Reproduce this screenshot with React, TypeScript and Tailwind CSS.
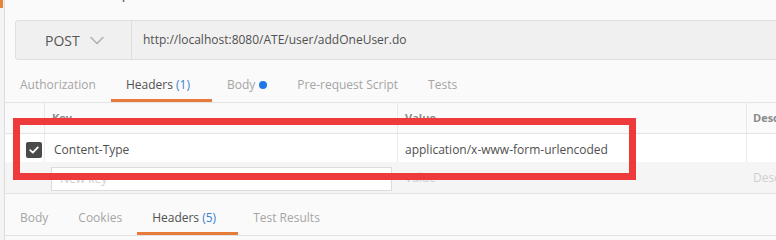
import React from "react";

const font = { fontFamily: '"Open Sans", "Liberation Sans", sans-serif' };

function Chevron() {
  return (
    <svg width="14" height="9" viewBox="0 0 14 9" fill="none">
      <path d="M1 1.5 L7 7.5 L13 1.5" stroke="#b0b0b0" strokeWidth="1.6" strokeLinecap="round" strokeLinejoin="round" />
    </svg>
  );
}

function Check() {
  return (
    <div className="w-[16px] h-[16px] rounded-[2px] bg-[#4a4a4a] flex items-center justify-center">
      <svg width="10" height="8" viewBox="0 0 10 8" fill="none">
        <path d="M1.2 4.2 L3.8 6.6 L8.8 1.4" stroke="#ffffff" strokeWidth="1.8" strokeLinecap="round" strokeLinejoin="round" />
      </svg>
    </div>
  );
}

export default function App() {
  return (
    <div className="w-[776px] h-[240px] bg-[#fafafa] overflow-hidden relative flex" style={font}>
      {/* left strip */}
      <div className="w-[5px] h-full bg-[#f4f4f4] border-r border-[#dcdcdc] flex flex-col shrink-0">
        <div className="w-[3px] h-[8px] bg-[#e8843a]" />
      </div>

      {/* main */}
      <div className="flex-1 min-w-0 flex flex-col">
        {/* clipped title */}
        <div className="h-[20px] overflow-hidden">
          <div className="-mt-[17px] pl-[28px] text-[16px] leading-[18px] text-[#606060] whitespace-nowrap">
            Untitled Request
          </div>
        </div>

        {/* url bar */}
        <div className="ml-[10px] h-[40px] w-[800px] flex border border-[#dedede] bg-[#f0f0f0] rounded-l-[3px]">
          <div className="w-[116px] shrink-0 border-r border-[#dedede] flex items-center pl-[29px] gap-[10px]">
            <span className="text-[14px] text-[#555555]">POST</span>
            <Chevron />
          </div>
          <div className="flex items-center pl-[11px] text-[12px] text-[#505050]">
            http://localhost:8080/ATE/user/addOneUser.do
          </div>
        </div>

        {/* request tabs */}
        <div className="h-[43px] border-b border-[#e4e4e4] flex text-[12px] leading-[18px] whitespace-nowrap">
          <div className="h-[42px] px-[15px] pt-[16px] text-[#a5a5a5]">Authorization</div>
          <div className="h-[42px] pl-[15px] pr-[22px] pt-[16px] text-[#505050] border-b-[3px] border-[#e67b3a]">
            Headers <span className="text-[#3b7fd4]">(1)</span>
          </div>
          <div className="h-[42px] px-[15px] pt-[16px] text-[#a5a5a5] flex items-start gap-[4px]">
            Body
            <span className="mt-[5px] w-[8px] h-[8px] rounded-full bg-[#1f76e8]" />
          </div>
          <div className="h-[42px] px-[15px] pt-[16px] text-[#a5a5a5]">Pre-request Script</div>
          <div className="h-[42px] px-[15px] pt-[16px] text-[#a5a5a5]">Tests</div>
        </div>

        {/* table header */}
        <div className="h-[31px] border-b border-[#e4e4e4] flex bg-[#fafafa] text-[11px] font-bold text-[#8a8a8a]">
          <div className="w-[40px] shrink-0 border-r border-[#e8e8e8]" />
          <div className="w-[352px] shrink-0 flex items-center pl-[7px]">Key</div>
          <div className="w-[349px] shrink-0 border-l border-[#e8e8e8] flex items-center pl-[7px]">Value</div>
          <div className="flex-1 border-l border-[#e8e8e8] flex items-center pl-[6px] overflow-hidden whitespace-nowrap">Description</div>
        </div>

        {/* row 1 */}
        <div className="h-[28px] flex bg-white text-[12px] text-[#505050]">
          <div className="w-[40px] shrink-0 border-r border-[#ececec] flex items-center pl-[21px] pt-[3px]">
            <Check />
          </div>
          <div className="w-[352px] shrink-0 flex items-center pl-[9px] pt-[3px]">Content-Type</div>
          <div className="w-[349px] shrink-0 border-l border-[#ececec] flex items-center pl-[7px] pt-[3px]">
            application/x-www-form-urlencoded
          </div>
          <div className="flex-1 border-l border-[#ececec]" />
        </div>

        {/* row 2 new */}
        <div className="h-[32px] flex bg-[#f5f5f5] border-b border-[#e2e2e2] text-[12px] text-[#cfcfcf]">
          <div className="w-[40px] shrink-0" />
          <div className="w-[352px] shrink-0 pl-[6px] pr-[5px] pt-[5px]">
            <div className="h-[24px] bg-white border border-[#dcdcdc] flex items-center pl-[8px]">New key</div>
          </div>
          <div className="w-[349px] shrink-0 flex items-center pl-[8px]">Value</div>
          <div className="flex-1 flex items-center pl-[7px] overflow-hidden whitespace-nowrap">Description</div>
        </div>

        {/* response tabs */}
        <div className="h-[41px] border-b border-[#e2e2e2] flex text-[12px] leading-[18px] whitespace-nowrap mt-[1px]">
          <div className="h-[40px] px-[15px] pt-[14px] text-[#a5a5a5]">Body</div>
          <div className="h-[40px] px-[15px] pt-[14px] text-[#a5a5a5]">Cookies</div>
          <div className="h-[40px] pl-[15px] pr-[22px] pt-[14px] text-[#505050] border-b-[3px] border-[#e67b3a]">
            Headers <span className="text-[#3b7fd4]">(5)</span>
          </div>
          <div className="h-[40px] px-[15px] pt-[14px] text-[#a5a5a5]">Test Results</div>
        </div>
      </div>

      {/* red highlight box */}
      <div className="absolute left-[13px] top-[118px] w-[623px] h-[62px] border-[7px] border-[#ee3a3a]" />
    </div>
  );
}
